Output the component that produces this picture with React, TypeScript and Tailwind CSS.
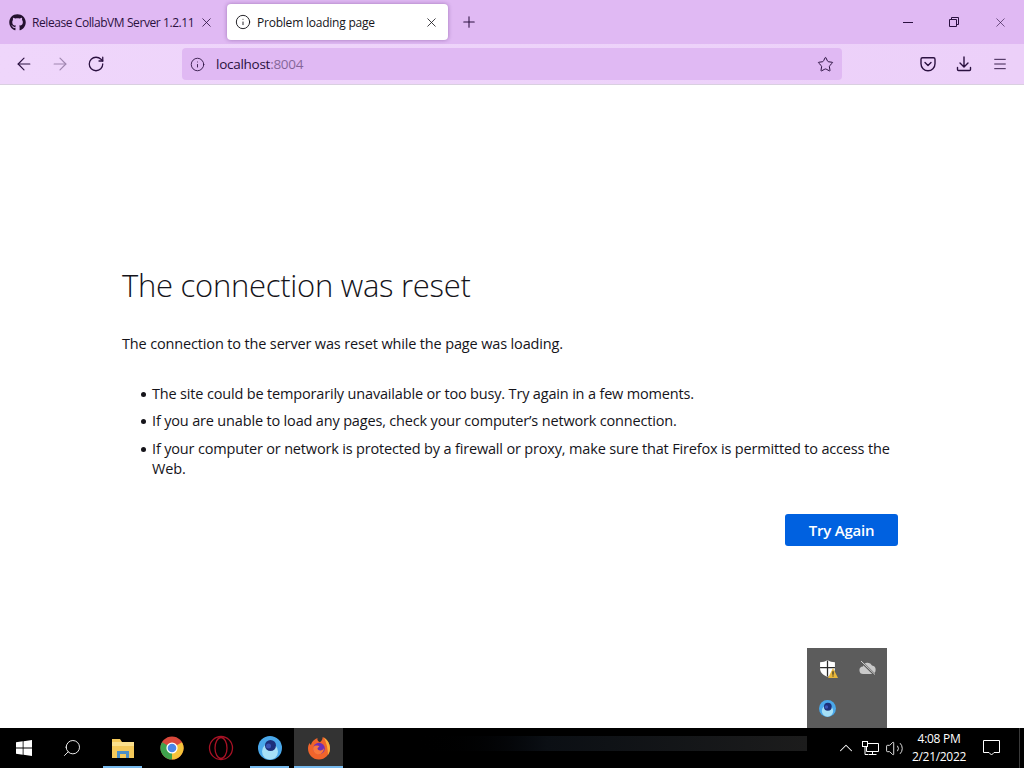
import { ArrowLeft, ArrowRight, ChevronUp, Info, Menu, Plus, RotateCw, Search, Star, Volume2, X } from "lucide-react";
import { FaGithub } from "react-icons/fa";

const bullets = [
  "The site could be temporarily unavailable or too busy. Try again in a few moments.",
  "If you are unable to load any pages, check your computer’s network connection.",
  "If your computer or network is protected by a firewall or proxy, make sure that Firefox is permitted to access the Web.",
];

function Pocket() {
  return (
    <svg width="16" height="16" viewBox="0 0 16 16" fill="none" stroke="#2b1140" strokeWidth="1.4" strokeLinecap="round" strokeLinejoin="round">
      <path d="M2.5 1.7h11A1.5 1.5 0 0 1 15 3.2v4.6a7 7 0 0 1-14 0V3.2a1.5 1.5 0 0 1 1.5-1.5z" />
      <path d="M5 6.5l3 3 3-3" />
    </svg>
  );
}

function DownloadIcon() {
  return (
    <svg width="16" height="16" viewBox="0 0 16 16" fill="none" stroke="#2b1140" strokeWidth="1.4" strokeLinecap="round" strokeLinejoin="round">
      <path d="M8 1v9.5M4 7l4 4 4-4" />
      <path d="M1.5 11.5v2a1 1 0 0 0 1 1h11a1 1 0 0 0 1-1v-2" />
    </svg>
  );
}

function WindowsLogo() {
  return (
    <svg width="16" height="16" viewBox="0 0 16 16" fill="#ffffff">
      <path d="M0 2.3 6.7 1.3v6.3H0zM7.5 1.2 16 0v7.6H7.5zM0 8.4h6.7v6.3L0 13.7zM7.5 8.4H16V16l-8.5-1.2z" />
    </svg>
  );
}

function FolderIcon() {
  return (
    <svg width="24" height="24" viewBox="0 0 24 24">
      <path d="M1 3h8l2 3h12v16H1z" fill="#f4c95a" />
      <path d="M1 6h22v4H1z" fill="#fbe08c" />
      <path d="M6 22v-7h12v7h-3v-4H9v4z" fill="#4b8fc7" />
    </svg>
  );
}

function ChromeIcon() {
  return (
    <svg width="24" height="24" viewBox="0 0 24 24">
      <circle cx="12" cy="12" r="11.5" fill="#d9483b" />
      <path d="M12 12 22 6.2A11.5 11.5 0 0 1 12 23.5z" fill="#f5c33b" />
      <path d="M12 12 12 23.5A11.5 11.5 0 0 1 2 6.2z" fill="#3fa34d" />
      <circle cx="12" cy="12" r="5.6" fill="#ffffff" />
      <circle cx="12" cy="12" r="4.3" fill="#4a86e8" />
    </svg>
  );
}

function OperaIcon() {
  return (
    <svg width="26" height="26" viewBox="0 0 26 26" fill="none" stroke="#a81225">
      <circle cx="13" cy="13" r="11.5" strokeWidth="1.3" />
      <ellipse cx="13" cy="13" rx="6" ry="10.5" strokeWidth="1.3" />
    </svg>
  );
}

function BlueOrb({ size }: { size: number }) {
  return (
    <svg width={size} height={size} viewBox="0 0 24 24">
      <circle cx="12" cy="12" r="12" fill="#4aa8ea" />
      <circle cx="12" cy="15.5" r="8" fill="#a6e0f7" />
      <circle cx="12.5" cy="9.5" r="5.5" fill="#1c2f7a" />
      <circle cx="10.5" cy="10" r="2.5" fill="#3a55b5" />
    </svg>
  );
}

function FirefoxIcon() {
  return (
    <svg width="24" height="24" viewBox="0 0 24 24">
      <path d="M12 23.5C5.5 23.5 1 18.5 1 12.5c0-2 .6-4 1.6-5.4.3 1 .8 1.6 1.4 2C4.600 5.500 8 3 10.500 2c-.5 2 .4 3.300 2.500 4.300 1.500-1 2.500-3 2.700-5.300 4 2 7.300 6.300 7.300 11.500 0 6-5 11-11 11z" fill="#f0642b" />
      <path d="M17 1.500c3.500 2.300 6 6.300 6 11 0 2.500-.8 4.600-2 6.500 0-6-1.500-12-4-17.500z" fill="#fbb03b" />
      <circle cx="12" cy="12.500" r="5.800" fill="#6f2fb5" />
      <path d="M6.500 10.500c1.500-1.500 5-1.500 6 0-1 .8-2 1-2 2 0 1.500 2 2.500 4 1.800 1-.3 2-1.200 2.300-2.300.4 3.500-2.300 6.500-5.300 6.500-3.500 0-6.500-4-5-8z" fill="#f9793c" />
    </svg>
  );
}

function ShieldIcon() {
  return (
    <div className="relative w-[17px] h-[17px]">
      <svg width="17" height="17" viewBox="0 0 16 16">
        <path d="M8 0c2 1.500 4.500 2 7 2v6c0 4-3.500 6.500-7 8-3.500-1.500-7-4-7-8V2c2.500 0 5-.5 7-2z" fill="#ffffff" />
        <path d="M7.400 0.500h1.200V15.500H7.400zM1 6.500h14v1.200H1z" fill="#2a2a2a" />
      </svg>
      <svg className="absolute -right-[2px] -bottom-[1px]" width="10" height="10" viewBox="0 0 9 9">
        <path d="M4.500 0 9 9H0z" fill="#e8b63a" />
        <path d="M4 3h1v3H4zM4 6.700h1v1H4z" fill="#222222" />
      </svg>
    </div>
  );
}

function OfflineCloud() {
  return (
    <svg width="17" height="14" viewBox="0 0 17 14">
      <path d="M4.500 13a3.800 3.800 0 0 1-.5-7.600A4.800 4.800 0 0 1 13 4.500a4.300 4.300 0 0 1 0 8.500z" fill="#c9c9c9" />
      <path d="M1.500 0 16 14" stroke="#5c5c5c" strokeWidth="2.400" />
      <path d="M2 0 16 13.500" stroke="#eeeeee" strokeWidth="0.800" />
    </svg>
  );
}

function NetworkIcon() {
  return (
    <svg width="17" height="15" viewBox="0 0 17 15" fill="none" stroke="#ffffff" strokeWidth="1">
      <path d="M4.500 2.500h12v8h-12zM10.500 10.500v2.500M6.500 13.500h8" />
      <rect x="0.500" y="0.500" width="5" height="5" fill="#000000" />
      <path d="M3 5.500v8h3" />
    </svg>
  );
}

function ToastIcon() {
  return (
    <svg width="17" height="16" viewBox="0 0 17 16" fill="none" stroke="#ffffff" strokeWidth="1">
      <path d="M.5.500h16v12h-5.500l-2.500 2.500-2.500-2.500H.5z" />
    </svg>
  );
}

function TaskbarApp({ open, active, children }: { open?: boolean; active?: boolean; children: React.ReactNode }) {
  return (
    <div className={`relative flex items-center justify-center h-full w-[49px] ${active ? "bg-[#333333]" : ""}`}>
      {children}
      {open && <div className={`absolute bottom-0 h-[2px] bg-[#76b9ed] ${active ? "left-0 right-0" : "left-[5px] right-[5px]"}`} />}
    </div>
  );
}

export default function App() {
  return (
    <div className="relative flex flex-col w-[1024px] h-[768px] overflow-hidden bg-white text-[#15141a] font-['Open_Sans','Noto_Sans',sans-serif]">
      {/* tab strip */}
      <div className="flex items-center h-[44px] pt-[4px] pb-[4px] bg-[#e0b9f3] shrink-0">
        <div className="flex items-center w-[227px] h-full pl-[9px] pr-[13px] text-[#2b1140]">
          <FaGithub className="w-[17px] h-[17px] shrink-0 text-[#24112f]" />
          <span className="ml-[6px] mt-[1px] whitespace-nowrap text-[12px] tracking-[-0.42px]">
            Release CollabVM Server 1.2.11
          </span>
          <X className="ml-auto w-[15px] h-[15px]" strokeWidth={1.3} />
        </div>
        <div className="flex items-center w-[221px] h-full pl-[8px] pr-[9px] bg-white rounded-[4px] shadow-[0_0_4px_rgba(70,20,100,0.4)]">
          <Info className="w-[16px] h-[16px] text-[#15141a]" strokeWidth={1.4} />
          <span className="ml-[6px] mt-[1px] text-[12px] tracking-[-0.22px] whitespace-nowrap">Problem loading page</span>
          <X className="ml-auto w-[15px] h-[15px]" strokeWidth={1.3} />
        </div>
        <Plus className="ml-[12px] w-[18px] h-[18px] text-[#2b1140]" strokeWidth={1.4} />
        <div className="ml-auto flex items-center text-[#2b1140]">
          <div className="flex justify-center w-[46px]">
            <div className="w-[10px] h-px bg-[#2b1140]" />
          </div>
          <div className="flex justify-center w-[46px]">
            <svg width="10" height="10" viewBox="0 0 10 10" fill="none" stroke="#2b1140">
              <path d="M.5 2.500h7v7h-7zM2.500 2.500v-2h7v7h-2" />
            </svg>
          </div>
          <div className="flex justify-center w-[47px] pr-[1px]">
            <X className="w-[15px] h-[15px]" strokeWidth={1} />
          </div>
        </div>
      </div>

      {/* toolbar */}
      <div className="flex items-center h-[41px] shrink-0 border-b border-[#d9cfe0] bg-gradient-to-r from-[#efd6fb] to-[#ecd0f9]">
        <div className="flex items-center w-[182px] pl-[6px] text-[#2b1140]">
          <div className="flex justify-center w-[36px]">
            <ArrowLeft className="w-[20px] h-[20px]" strokeWidth={1.4} />
          </div>
          <div className="flex justify-center w-[36px]">
            <ArrowRight className="w-[20px] h-[20px] opacity-40" strokeWidth={1.4} />
          </div>
          <div className="flex justify-center w-[36px]">
            <RotateCw className="w-[18px] h-[18px]" strokeWidth={1.7} />
          </div>
        </div>
        <div className="flex items-center w-[660px] h-[32px] pl-[8px] pr-[8px] rounded-[4px] bg-[#e0b9f3]">
          <Info className="w-[15px] h-[15px] text-[#2b1140]" strokeWidth={1.4} />
          <span className="ml-[11px] text-[13.500px] tracking-[-0.27px] text-[#2b1140]">
            localhost<span className="opacity-50">:8004</span>
          </span>
          <Star className="ml-auto w-[17px] h-[17px] text-[#2b1140]" strokeWidth={1.4} />
        </div>
        <div className="flex items-center ml-[78px] gap-[20px]">
          <Pocket />
          <DownloadIcon />
          <Menu className="w-[16px] h-[16px] text-[#2b1140]" strokeWidth={1.4} />
        </div>
      </div>

      {/* error page */}
      <main className="flex-1 pl-[122px] pr-[126px] pt-[179px]">
        <h1 className="text-[31px] leading-[42px] font-light tracking-[-0.27px] text-[#15141a] whitespace-nowrap">
          The connection was reset
        </h1>
        <p className="mt-[28px] text-[14.500px] leading-[20px] tracking-[-0.15px]">
          The connection to the server was reset while the page was loading.
        </p>
        <ul className="mt-[30px] pl-[19px] flex flex-col gap-[7px] text-[14.500px] leading-[20px] tracking-[-0.17px]">
          {bullets.map((b) => (
            <li key={b} className="flex last:mt-[1px]">
              <span className="mt-[8px] w-[5px] h-[5px] rounded-full bg-[#15141a] shrink-0 mr-[6px]" />
              <span>{b}</span>
            </li>
          ))}
        </ul>
        <div className="flex justify-end mt-[35px]">
          <button className="w-[113px] h-[32px] rounded-[3px] bg-[#0061e0] text-white text-[15px] font-semibold tracking-[-0.2px]">
            Try Again
          </button>
        </div>
      </main>

      {/* tray overflow flyout */}
      <div className="absolute left-[807px] top-[648px] w-[80px] h-[80px] grid grid-cols-2 grid-rows-2 bg-[#5c5c5c]">
        <div className="flex items-center justify-center">
          <ShieldIcon />
        </div>
        <div className="flex items-center justify-center">
          <OfflineCloud />
        </div>
        <div className="flex items-center justify-center">
          <BlueOrb size={17} />
        </div>
      </div>

      {/* taskbar */}
      <div className="relative flex items-center h-[40px] shrink-0 bg-black text-white">
        <div className="flex justify-center w-[48px]">
          <WindowsLogo />
        </div>
        <div className="flex justify-center w-[48px]">
          <Search className="w-[20px] h-[20px] -scale-x-100" strokeWidth={1.1} />
        </div>
        <div className="flex items-center h-full pl-[2px]">
          <TaskbarApp open>
            <FolderIcon />
          </TaskbarApp>
          <TaskbarApp>
            <ChromeIcon />
          </TaskbarApp>
          <TaskbarApp>
            <OperaIcon />
          </TaskbarApp>
          <TaskbarApp open>
            <BlueOrb size={24} />
          </TaskbarApp>
          <TaskbarApp open active>
            <FirefoxIcon />
          </TaskbarApp>
        </div>
        <div className="ml-[64px] mb-[10px] w-[400px] h-[15px] bg-gradient-to-r from-black via-[#0b0f14] via-35% to-[#1c1c1c]" />
        <div className="flex items-center ml-auto h-full">
          <ChevronUp className="w-[22px] h-[22px]" strokeWidth={1.1} />
          <div className="ml-[5px]">
            <NetworkIcon />
          </div>
          <Volume2 className="ml-[6px] w-[19px] h-[19px]" strokeWidth={1.1} />
          <div className="flex flex-col items-center w-[70px] text-[12px] leading-[18px] tracking-[-0.3px]">
            <span>4:08 PM</span>
            <span>2/21/2022</span>
          </div>
          <div className="flex justify-center w-[34px] mr-[16px]">
            <ToastIcon />
          </div>
        </div>
        <div className="absolute right-[4px] top-0 bottom-0 w-px bg-[#3a3a3a]" />
      </div>
    </div>
  );
}
